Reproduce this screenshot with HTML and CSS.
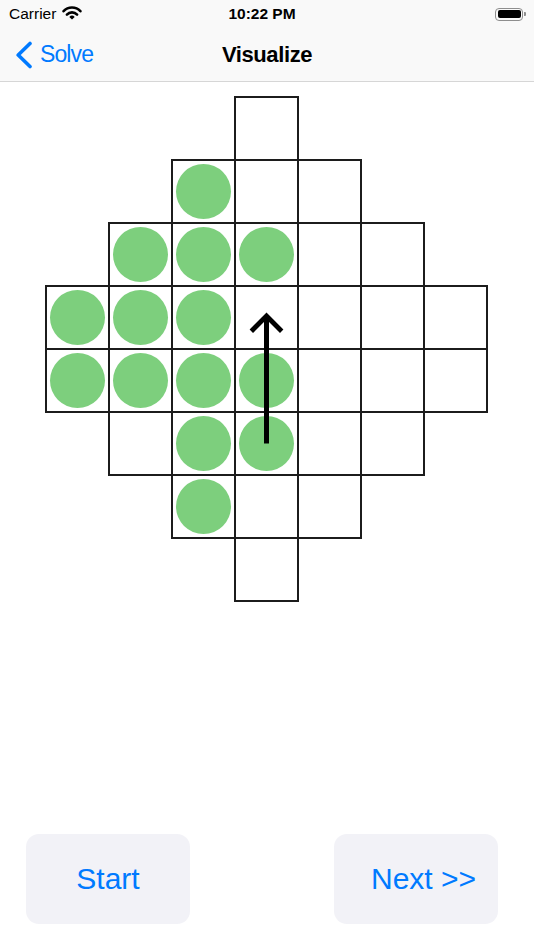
FILE: index.html
```html
<!DOCTYPE html>
<html lang="en">
<head>
<meta charset="utf-8">
<title>Visualize</title>
<link rel="stylesheet" href="styles.css">
</head>
<body>
<div class="app">
  <header class="top">
    <div class="status">
      <div class="st-left">
        <span class="carrier">Carrier</span>
        <svg class="wifi" width="20" height="14" viewBox="0 0 20 14">
          <path d="M1.6 5.2 A11.5 11.5 0 0 1 18.4 5.2" fill="none" stroke="#000" stroke-width="2.6" stroke-linecap="round"/>
          <path d="M4.9 8.6 A7 7 0 0 1 15.1 8.6" fill="none" stroke="#000" stroke-width="2.6" stroke-linecap="round"/>
          <path d="M10 13.6 L7.3 10.9 A3.8 3.8 0 0 1 12.7 10.9 Z" fill="#000"/>
        </svg>
      </div>
      <div class="st-time">10:22 PM</div>
      <div class="st-right">
        <div class="battery"><div class="bat-fill"></div></div>
        <div class="bat-nub"></div>
      </div>
    </div>
    <nav class="nav">
      <a class="back">
        <svg class="chev" width="18" height="28" viewBox="0 0 18 28">
          <path d="M15 2.5 L3.2 14 L15 25.5" fill="none" stroke="#007aff" stroke-width="3.6" stroke-linecap="round" stroke-linejoin="round"/>
        </svg>
        <span class="back-label">Solve</span>
      </a>
      <div class="title">Visualize</div>
      <div class="nav-spacer"></div>
    </nav>
  </header>

  <main class="stage">
    <div class="board">
      <div class="row"><div class="cell"></div></div>
      <div class="row"><div class="cell"><div class="peg"></div></div><div class="cell"></div><div class="cell"></div></div>
      <div class="row"><div class="cell"><div class="peg"></div></div><div class="cell"><div class="peg"></div></div><div class="cell"><div class="peg"></div></div><div class="cell"></div><div class="cell"></div></div>
      <div class="row"><div class="cell"><div class="peg"></div></div><div class="cell"><div class="peg"></div></div><div class="cell"><div class="peg"></div></div><div class="cell"></div><div class="cell"></div><div class="cell"></div><div class="cell"></div></div>
      <div class="row"><div class="cell"><div class="peg"></div></div><div class="cell"><div class="peg"></div></div><div class="cell"><div class="peg"></div></div><div class="cell"><div class="peg"></div></div><div class="cell"></div><div class="cell"></div><div class="cell"></div></div>
      <div class="row"><div class="cell"></div><div class="cell"><div class="peg"></div></div><div class="cell"><div class="peg"></div></div><div class="cell"></div><div class="cell"></div></div>
      <div class="row"><div class="cell"><div class="peg"></div></div><div class="cell"></div><div class="cell"></div></div>
      <div class="row"><div class="cell"></div></div>
      <svg class="arrow" width="441" height="504" viewBox="0 0 441 504">
        <line x1="220.5" y1="346.5" x2="220.5" y2="221" stroke="#000" stroke-width="5"/>
        <path d="M207 232.5 L220.5 219 L234 232.5" fill="none" stroke="#000" stroke-width="4.8" stroke-linecap="square" stroke-linejoin="miter"/>
      </svg>
    </div>
  </main>

  <footer class="actions">
    <button class="btn">Start</button>
    <button class="btn btn-next">Next &gt;&gt;</button>
  </footer>
</div>
</body>
</html>
```
FILE: styles.css
```css
* { box-sizing: border-box; }
html, body { margin: 0; padding: 0; background: #fff; }
body { font-family: "Liberation Sans", Arial, sans-serif; color: #000; }

.app {
  width: 534px;
  height: 950px;
  display: flex;
  flex-direction: column;
  overflow: hidden;
}

.top {
  background: #f9f9f9;
  border-bottom: 1px solid #d6d6d6;
}

.status {
  height: 28px;
  display: grid;
  grid-template-columns: 1fr auto 1fr;
  align-items: center;
  padding: 0 8px 0 9px;
}
.st-left { display: flex; align-items: center; gap: 6px; }
.carrier { font-size: 15.5px; line-height: 1; }
.wifi { display: block; margin-top: -2px; }
.st-time { font-size: 15.5px; font-weight: bold; line-height: 1; margin-right: 11px; }
.st-right { display: flex; justify-content: flex-end; align-items: center; }
.battery {
  width: 28px;
  height: 13px;
  border: 1px solid #8e8e8e;
  border-radius: 4px;
  padding: 1.5px;
}
.bat-fill { width: 100%; height: 100%; background: #000; border-radius: 2px; }
.bat-nub { width: 2px; height: 4px; background: #8e8e8e; border-radius: 0 1px 1px 0; margin-left: 1px; }

.nav {
  height: 53px;
  display: grid;
  grid-template-columns: 1fr auto 1fr;
  align-items: center;
  padding: 0 15px;
}
.back { display: flex; align-items: center; gap: 7px; color: #007aff; }
.chev { display: block; }
.back-label { font-size: 23px; letter-spacing: -0.9px; line-height: 1; }
.title { font-size: 22px; font-weight: bold; letter-spacing: -0.4px; line-height: 1; }

.stage {
  padding: 15px 0 0 46px;
  display: flex;
}
.board {
  position: relative;
  width: 441px;
  display: flex;
  flex-direction: column;
}
.row { display: flex; justify-content: center; }
.cell {
  width: 63px;
  height: 63px;
  outline: 2px solid #1c1c1c;
  outline-offset: -1px;
  display: flex;
  align-items: center;
  justify-content: center;
}
.peg {
  width: 55px;
  height: 55px;
  border-radius: 50%;
  background: #7dcf7d;
}
.arrow { position: absolute; left: 0; top: 0; pointer-events: none; }

.actions {
  margin-top: auto;
  display: flex;
  justify-content: space-between;
  padding: 0 36.5px 26px 26px;
}
.btn {
  width: 164px;
  height: 90px;
  border: none;
  border-radius: 13px;
  background: #f2f2f7;
  color: #007aff;
  font-family: "Liberation Sans", Arial, sans-serif;
  font-size: 30px;
  padding: 0;
}
.btn-next { padding-left: 16px; }
```
